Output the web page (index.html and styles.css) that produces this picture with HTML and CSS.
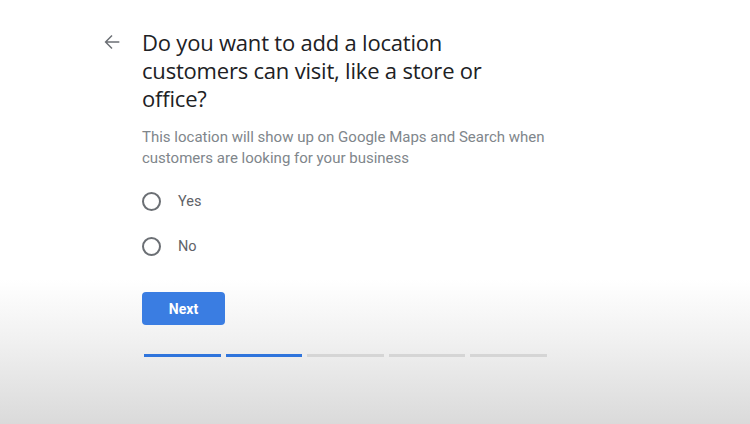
FILE: index.html
```html
<!DOCTYPE html>
<html lang="en">
<head>
  <meta charset="UTF-8">
  <meta name="viewport" content="width=device-width, initial-scale=1.0"/>
  <title>Add a location</title>
  <link rel="stylesheet" href="styles.css">
</head>
<body>
  <div class="page">
    <button class="back" aria-label="Back">
      <svg width="22" height="22" viewBox="0 0 24 24">
        <path d="M20 12H5M12 5l-7 7 7 7" fill="none" stroke="#6b6f74" stroke-width="1.6"/>
      </svg>
    </button>

    <div class="content">
      <h1>Do you want to add a location customers can visit, like a store or office?</h1>
      <p class="hint">This location will show up on Google Maps and Search when customers are looking for your business</p>

      <div class="options">
        <label class="option">
          <input type="radio" name="location" value="yes">
          <span class="circle"></span>
          Yes
        </label>
        <label class="option">
          <input type="radio" name="location" value="no">
          <span class="circle"></span>
          No
        </label>
      </div>

      <button class="next">Next</button>

      <div class="progress">
        <span class="step done"></span>
        <span class="step done"></span>
        <span class="step"></span>
        <span class="step"></span>
        <span class="step"></span>
      </div>
    </div>
  </div>
</body>
</html>
```

FILE: styles.css
```css
:root {
  --blue: #3a7de2;
  --text-dark: #202124;
  --text-gray: #80868b;
  --line-gray: #d5d5d5;
}

* {
  box-sizing: border-box;
}

html, body {
  height: 100%;
}

body {
  margin: 0;
  font-family: Roboto, "Noto Sans", sans-serif;
  color: var(--text-dark);
  background: linear-gradient(to bottom, #fff 0, #fff 66%, #f1f1f1 80%, #dadada 100%);
}

.page {
  display: flex;
  padding: 28px 0 0 100px;
}

.back {
  width: 24px;
  height: 24px;
  margin: 2px 18px 0 0;
  padding: 0;
  border: none;
  background: none;
  display: flex;
  align-items: center;
  justify-content: center;
  cursor: pointer;
}

.content {
  width: 412px;
}

h1 {
  margin: 0;
  font-family: "Open Sans", Roboto, sans-serif;
  font-size: 22px;
  font-weight: 400;
  line-height: 28px;
  letter-spacing: -0.2px;
  width: 350px;
}

.hint {
  margin: 15px 0 0;
  font-size: 15px;
  line-height: 21px;
  color: var(--text-gray);
}

.options {
  margin-top: 10px;
}

.option {
  height: 45px;
  display: flex;
  align-items: center;
  gap: 17px;
  font-size: 14.5px;
  color: #5f6368;
  cursor: pointer;
}

.option input {
  display: none;
}

.circle {
  width: 19px;
  height: 19px;
  border: 2px solid #6b6f74;
  border-radius: 50%;
}

.next {
  margin-top: 23px;
  width: 83px;
  height: 33px;
  border: none;
  border-radius: 4px;
  background-color: var(--blue);
  color: #fff;
  font-family: Roboto, sans-serif;
  font-size: 14px;
  font-weight: 700;
  cursor: pointer;
}

.progress {
  display: flex;
  gap: 5px;
  width: 403px;
  margin-top: 29px;
  margin-left: 2px;
}

.step {
  flex: 1;
  height: 3px;
  background-color: var(--line-gray);
}

.step.done {
  background-color: #2f74dc;
}
```
